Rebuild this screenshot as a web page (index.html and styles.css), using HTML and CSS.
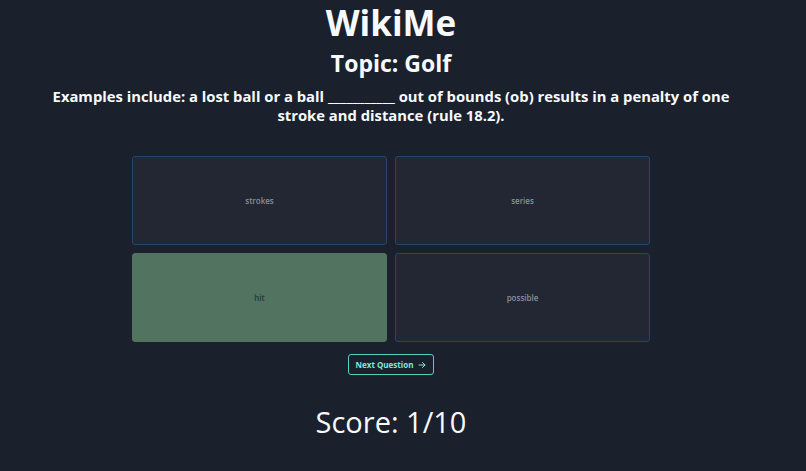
FILE: index.html
```html
<!DOCTYPE html>
<html lang="en">
<head>
  <meta charset="UTF-8" />
  <meta name="viewport" content="width=device-width,initial-scale=1" />
  <title>WikiMe</title>
  <link rel="stylesheet" href="styles.css">
</head>
<body>
  <div class="page">
    <header>
      <h1>WikiMe</h1>
      <h2>Topic: Golf</h2>
      <p class="question">Examples include: a lost ball or a ball ___________ out of bounds (ob) results in a penalty of one stroke and distance (rule 18.2).</p>
    </header>

    <div class="answers">
      <button class="answer">strokes</button>
      <button class="answer">series</button>
      <button class="answer correct">hit</button>
      <button class="answer">possible</button>
    </div>

    <div class="actions">
      <button class="next">Next Question
        <svg class="arrow" viewBox="0 0 16 16" width="8" height="8" fill="none" stroke="currentColor" stroke-width="2" stroke-linecap="round" stroke-linejoin="round">
          <path d="M2 8h12M9 3l5 5-5 5"/>
        </svg>
      </button>
    </div>

    <div class="score">Score: 1/10</div>
  </div>
</body>
</html>
```

FILE: styles.css
```css
body {
  font-family: "Open Sans", "Noto Sans", sans-serif;
  background: #1a202c;
  color: #f7fafc;
  margin: 0;
  padding: 0;
  min-height: 100vh;
}
.page {
  width: 782px;
  text-align: center;
}
header h1 {
  margin: 0;
  padding-top: 2px;
  font-size: 35px;
  line-height: 42px;
  font-weight: 700;
}
header h2 {
  margin: 3px 0 0;
  font-size: 23px;
  line-height: 32px;
  font-weight: 700;
}
.question {
  margin: 8px auto 0;
  max-width: 700px;
  font-size: 14.8px;
  line-height: 19px;
  font-weight: 700;
}
.answers {
  display: grid;
  grid-template-columns: 255px 255px;
  grid-auto-rows: 89px;
  gap: 8px;
  justify-content: center;
  margin-top: 31px;
}
.answer {
  background: #232733;
  border: 1.5px solid #2a4466;
  border-radius: 3px;
  color: #8a8f99;
  font-family: inherit;
  font-size: 8px;
  font-weight: 600;
  cursor: pointer;
}
.answer.correct {
  background: #52735f;
  border-color: #52735f;
  color: #2a3a30;
}
.actions {
  margin-top: 9px;
}
.next {
  display: inline-flex;
  align-items: center;
  gap: 5px;
  background: transparent;
  border: 1px solid #4fd1c5;
  border-radius: 3px;
  color: #81e6d9;
  font-family: inherit;
  font-size: 8px;
  font-weight: 700;
  padding: 0 7px;
  height: 21px;
  cursor: pointer;
}
.score {
  margin-top: 27px;
  font-size: 29px;
  line-height: 40px;
  color: #f7fafc;
}
```
